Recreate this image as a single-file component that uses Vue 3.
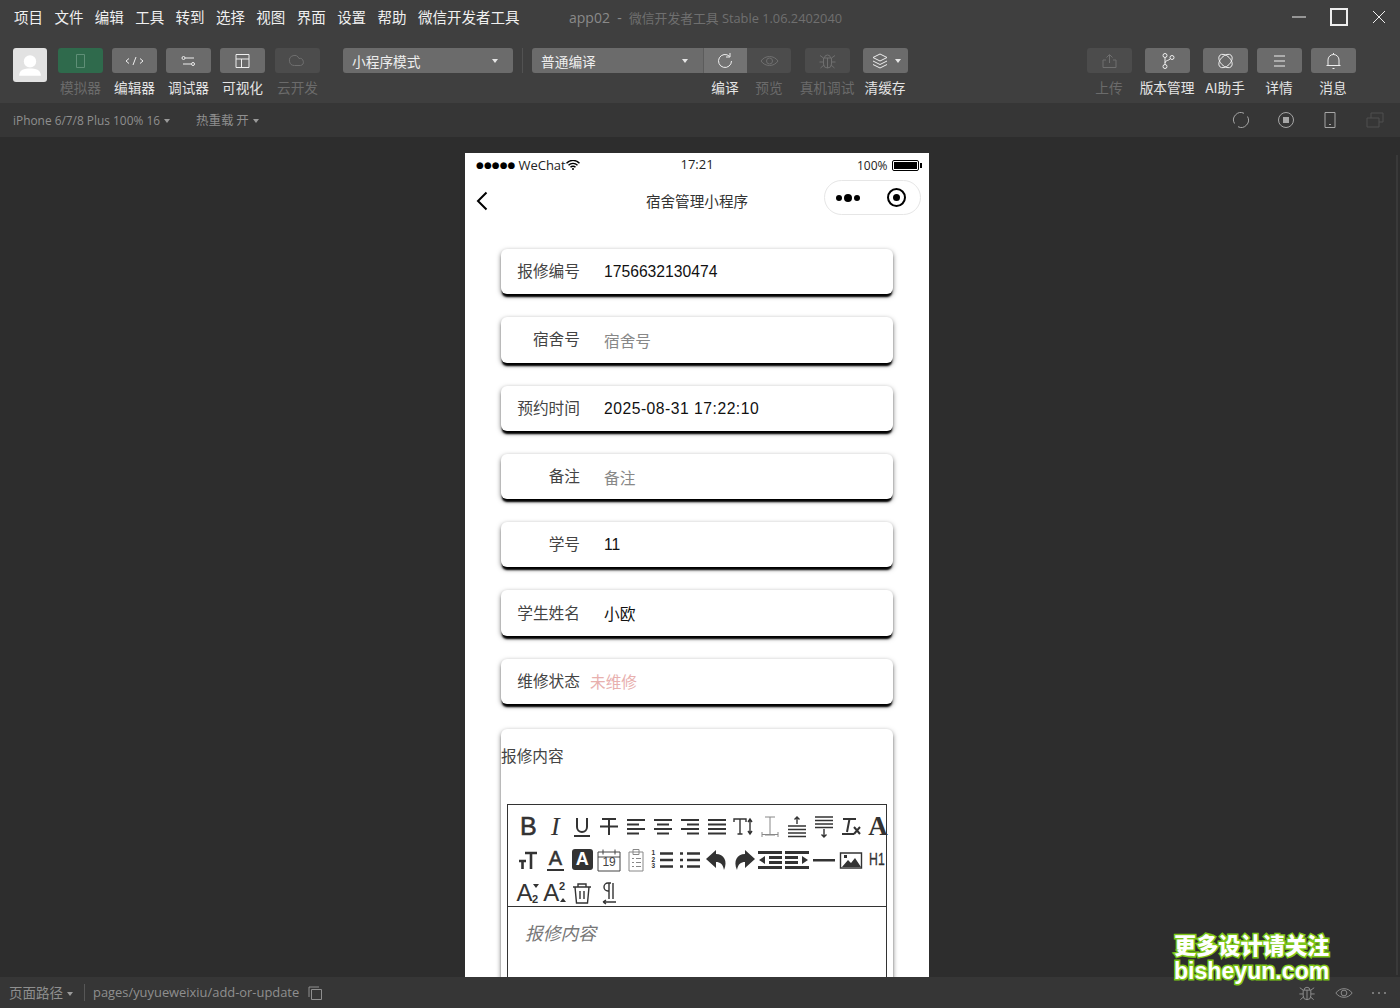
<script setup>
const menus = ['项目', '文件', '编辑', '工具', '转到', '选择', '视图', '界面', '设置', '帮助', '微信开发者工具']

const modeTools = [
  { label: '模拟器', cls: 'green', off: true, icon: 'M7.500 3.500h8v13h-8z' },
  { label: '编辑器', icon: 'M6 7.500 3 10l3 2.500M17 7.500l3 2.500-3 2.500M13 6l-3 8' },
  { label: '调试器', icon: 'M8 7h9M14 13H6M8 7a1.500 1.500 0 1 1-3 0 1.500 1.500 0 0 1 3 0ZM17.500 13a1.500 1.500 0 1 1-3 0 1.500 1.500 0 0 1 3 0Z' },
  { label: '可视化', icon: 'M5 3.500h13v13H5zM5 8h13M10.500 8v8.500' },
  { label: '云开发', off: true, icon: 'M8.500 14.500a5 5 0 1 1 4.500-7M13 7.500a3.500 3.500 0 1 1 1.500 7H8.500' }
]

const rightTools = [
  { label: '上传', off: true, icon: 'M11.500 12V4M8.500 6.500l3-3 3 3M8 9H5v7.500h13V9h-3' },
  { label: '版本管理', icon: 'M9 6.500v7M9 12c0-3 4-2 5.500-4.500M11 4.500a2 2 0 1 1-4 0 2 2 0 0 1 4 0ZM11 15.500a2 2 0 1 1-4 0 2 2 0 0 1 4 0ZM18 6.500a2 2 0 1 1-4 0 2 2 0 0 1 4 0Z' },
  { label: 'AI助手', icon: 'M5.800 4.300A8 5 45 1 1 17.200 15.700 8 5 45 1 1 5.800 4.300ZM17.200 4.300A8 5 -45 1 1 5.800 15.700 8 5 -45 1 1 17.200 4.300Z' },
  { label: '详情', icon: 'M6 5h11M6 10h11M6 15h11' },
  { label: '消息', icon: 'M6 14.500V9a5.500 5.500 0 0 1 11 0v5.500M4.500 14.500h14M11.500 3.500V2M10.500 17.500h2' }
]

const fields = [
  { label: '报修编号', value: '1756632130474' },
  { label: '宿舍号', value: '宿舍号', hint: true },
  { label: '预约时间', value: '2025-08-31 17:22:10', spaced: true },
  { label: '备注', value: '备注', hint: true },
  { label: '学号', value: '11' },
  { label: '学生姓名', value: '小欧' },
  { label: '维修状态', value: '未维修', state: true }
]

// editor toolbar, one entry per button
const editorTools = [
  { text: 'B', cls: 'big' },
  { text: 'I', cls: 'ital' },
  { d: 'M7 3v9a5 5 0 0 0 10 0V3M4 21h16', thick: true },
  { d: 'M5 4h14M12 4v16M3 11.500h18', thick: true },
  { d: 'M3 5h18M3 9.500h12M3 14h18M3 18.500h12', thick: true },
  { d: 'M3 5h18M6 9.500h12M3 14h18M6 18.500h12', thick: true },
  { d: 'M3 5h18M9 9.500h12M3 14h18M9 18.500h12', thick: true },
  { d: 'M3 5h18M3 9.500h18M3 14h18M3 18.500h18', thick: true },
  { d: 'M2 7V4h12v3M8 4v15M5.500 19h5M18 4v15M16 7l2-3 2 3M16 16l2 3 2-3' },
  { d: 'M7 2h10M7 20h10M12 2v18M4 17v5M20 17v5M4 19.500h16', light: true },
  { d: 'M12 9V2M9.500 4.500 12 2l2.500 2.500M3 11h18M3 14.500h18M3 18h18M3 21.500h18' },
  { d: 'M3 2h18M3 5.500h18M3 9h18M3 12.500h18M12 14v8M9.500 19.500 12 22l2.500-2.500' },
  { d: 'M4 4h13M10.500 4 8 17M3 19h12M15 12l6 7M21 12l-6 7', thick: true },
  { text: 'A', cls: 'serif' },
  { d: 'M9 5h12M15 5v16M3 13h7M6.500 13v8', heavy: true },
  { text: 'A', cls: 'under' },
  { text: 'A', cls: 'boxed' },
  { d: 'M1 4h22v19H1zM1 9h22M6 1.500v5M18 1.500v5', dark: true, text: '19', cls: 'cal' },
  { d: 'M5 4h14v19H5zM9 1.500h6v5H9zM8 10l1 1 1-1M12 10.500h5M8 14l1 1 1-1M12 14.500h5M8 18l1 1 1-1M12 18.500h5', light: true },
  { d: 'M9 5.500h13M9 12h13M9 18.500h13', heavy: true, numbers: true },
  { d: 'M9 5.500h13M9 12h13M9 18.500h13M2 5.500h3M2 12h3M2 18.500h3', heavy: true },
  { fill: 'M11 2 1 11l10 9v-6c4 0 7 2 8 8 4-9 0-16-8-16Z' },
  { fill: 'M13 2l10 9-10 9v-6c-4 0-7 2-8 8-4-9 0-16 8-16Z' },
  { fill: 'M0 3h24v3H0zM11 8h13v3H11zM11 13h13v3H11zM0 18h24v3H0zM7 8v8l-6-4Z' },
  { fill: 'M0 3h24v3H0zM0 8h13v3H0zM0 13h13v3H0zM0 18h24v3H0zM17 8v8l6-4Z' },
  { fill: 'M1 11h22v2.500H1Z' },
  { d: 'M1.500 5h21v15h-21z', fillD: 'M3 19l6-7 3 3 4-5 6 9ZM5 7h3v3H5Z' },
  { text: 'H1', cls: 'head' },
  { text: 'A', cls: 'sub', mark: 'down' },
  { text: 'A', cls: 'sub', mark: 'up' },
  { d: 'M3 6h18M8 6V3h8v3M5 6l1.500 16h11L19 6M10 10v8M14 10v8' },
  { d: 'M14 2h-3a4 4 0 0 0 0 8h1V2M12 10v8M16 2v16M6 21h13M6 21l3-2M6 21l3 2' }
]
</script>

<template>
  <div class="ide">
    <header class="top">
      <div class="titlebar">
        <nav class="menu">
          <span v-for="m in menus" :key="m">{{ m }}</span>
        </nav>
        <div class="apptitle">app02 &nbsp;-&nbsp; <span>微信开发者工具 Stable 1.06.2402040</span></div>
        <div class="winbtns">
          <svg width="16" height="16" viewBox="0 0 16 16"><path d="M1 8h14" /></svg>
          <svg width="20" height="20" viewBox="0 0 20 20"><path class="heavy" d="M2 2h16v16H2z" /></svg>
          <svg width="16" height="16" viewBox="0 0 16 16"><path d="M2 2l12 12M14 2 2 14" /></svg>
        </div>
      </div>

      <div class="toolbar">
        <div class="avatar">
          <svg width="34" height="34" viewBox="0 0 33 33">
            <circle cx="16.500" cy="13" r="6" class="solid" />
            <path d="M6 27c0-6 5-7 10.500-7S27 21 27 27Z" class="solid" />
          </svg>
        </div>
        <div class="modes">
          <div v-for="t in modeTools" :key="t.label" class="tool" :class="{ off: t.off }">
            <div class="btn" :class="t.cls">
              <svg width="23" height="20" viewBox="0 0 23 20"><path :d="t.icon" /></svg>
            </div>
            <span>{{ t.label }}</span>
          </div>
        </div>
        <div class="select mode">小程序模式<i class="caret"></i></div>
        <div class="divider"></div>
        <div class="compile">
          <div class="select build">普通编译<i class="caret"></i></div>
          <div class="tool wide">
            <div class="btn seg">
              <svg width="23" height="20" viewBox="0 0 23 20"><path d="M17.500 10a6.500 6.500 0 1 1-2-4.700M16 2v4h-4" /></svg>
            </div>
            <span>编译</span>
          </div>
          <div class="tool wide off">
            <div class="btn seg">
              <svg width="23" height="20" viewBox="0 0 23 20"><path d="M3 10c4-6 13-6 17 0-4 6-13 6-17 0Z" /><circle cx="11.500" cy="10" r="3" /></svg>
            </div>
            <span>预览</span>
          </div>
          <div class="tool wide gap off">
            <div class="btn">
              <svg width="23" height="20" viewBox="0 0 23 20"><path d="M7.500 7h8v6a4 4 0 0 1-8 0ZM8.500 7a3 3 0 0 1 6 0M11.500 7v10M7.500 7 4 4.500M15.500 7 19 4.500M7.500 11H3.500M15.500 11h4M8 14l-3.500 3M15 14l3.500 3" /></svg>
            </div>
            <span>真机调试</span>
          </div>
          <div class="tool wide gap">
            <div class="btn">
              <svg width="23" height="20" viewBox="0 0 23 20"><path d="M10 3 3 6.500 10 10l7-3.500ZM3 10l7 3.500 7-3.500M3 13.500 10 17l7-3.500" /></svg>
              <i class="caret small"></i>
            </div>
            <span>清缓存</span>
          </div>
        </div>
        <div class="rights">
          <div v-for="t in rightTools" :key="t.label" class="tool" :class="{ off: t.off }">
            <div class="btn">
              <svg width="23" height="20" viewBox="0 0 23 20"><path :d="t.icon" /></svg>
            </div>
            <span>{{ t.label }}</span>
          </div>
        </div>
      </div>

      <div class="subbar">
        <div class="device">iPhone 6/7/8 Plus 100% 16<i class="caret dim"></i></div>
        <div class="reload">热重载 开<i class="caret dim"></i></div>
        <div class="subicons">
          <svg width="18" height="18" viewBox="0 0 18 18"><path d="M2.500 12.500A7.300 7.300 0 0 1 12 2.300M15.500 5.500A7.300 7.300 0 0 1 6 15.700" /></svg>
          <svg width="18" height="18" viewBox="0 0 18 18"><circle cx="9" cy="9" r="7.500" /><rect x="6" y="6" width="6" height="6" class="solid" /></svg>
          <svg width="18" height="18" viewBox="0 0 18 18"><path d="M4 1.500h10v15H4zM8 13.500h2" /></svg>
          <svg class="faint" width="18" height="18" viewBox="0 0 18 18"><path d="M1 7h12v9H1zM5 7V2h12v9h-4" /></svg>
        </div>
      </div>
    </header>

    <main class="stage">
      <div class="phone">
        <div class="statusbar">
          <span class="dots">●●●●●</span>
          <span class="carrier">WeChat</span>
          <svg class="wifi" width="14" height="10" viewBox="0 0 14 10">
            <path d="M.5 3.200a9 9 0 0 1 13 0M2.500 5.300a6.300 6.300 0 0 1 9 0M4.500 7.300a3.400 3.400 0 0 1 5 0" />
            <circle cx="7" cy="9" r="1" />
          </svg>
          <span class="clock">17:21</span>
          <span class="percent">100%</span>
          <span class="battery"><i></i></span>
        </div>
        <div class="navbar">
          <svg class="back" width="12" height="20" viewBox="0 0 12 20"><path d="M10.500 1.500 2 10l8.500 8.500" /></svg>
          <span class="navtitle">宿舍管理小程序</span>
          <div class="capsule">
            <span class="more"><i></i><i class="mid"></i><i></i></span>
            <span class="target"><i></i></span>
          </div>
        </div>

        <div class="form">
          <div v-for="f in fields" :key="f.label" class="card">
            <label>{{ f.label }}</label>
            <span class="value" :class="{ hint: f.hint, state: f.state, spaced: f.spaced }">{{ f.value }}</span>
          </div>

          <div class="card content">
            <div class="content-title">报修内容</div>
            <div class="editor">
              <div class="ql-toolbar">
                <span v-for="(t, i) in editorTools" :key="i" class="ql-btn">
                  <svg v-if="t.d || t.fill" width="24" height="24" viewBox="0 0 24 24">
                    <path v-if="t.d" :d="t.d" :class="{ thick: t.thick, light: t.light, heavy: t.heavy, dark: t.dark }" />
                    <path v-if="t.fill" :d="t.fill" class="filled" />
                    <path v-if="t.fillD" :d="t.fillD" class="filled" />
                  </svg>
                  <em v-if="t.numbers" class="nums">1<br />2<br />3</em>
                  <b v-if="t.text" :class="t.cls">{{ t.text }}</b>
                  <template v-if="t.mark">
                    <em class="mark" :class="t.mark">2</em>
                    <i class="tri" :class="t.mark"></i>
                  </template>
                </span>
              </div>
              <div class="ql-body">报修内容</div>
            </div>
          </div>
        </div>
      </div>
      <div class="scrollbar"></div>
    </main>

    <footer class="statusline">
      <span class="path-label">页面路径<i class="caret dim"></i></span>
      <span class="path">pages/yuyueweixiu/add-or-update</span>
      <svg class="copy" width="16" height="16" viewBox="0 0 16 16"><path d="M4.500 4.500h10v10h-10zM2 12V2h10" /></svg>
      <div class="foot-right">
        <svg width="22" height="20" viewBox="0 0 23 20"><path d="M7.500 7h8v6a4 4 0 0 1-8 0ZM8.500 7a3 3 0 0 1 6 0M11.500 7v10M7.500 7 4 4.500M15.500 7 19 4.500M7.500 11H3.500M15.500 11h4M8 14l-3.500 3M15 14l3.500 3" /></svg>
        <svg width="22" height="20" viewBox="0 0 23 20"><path d="M3 10c4-6 13-6 17 0-4 6-13 6-17 0Z" /><circle cx="11.500" cy="10" r="3" /></svg>
        <span class="ellipsis"><i></i><i></i><i></i></span>
      </div>
    </footer>

    <div class="watermark">
      <div>更多设计请关注</div>
      <div class="site">bisheyun.com</div>
    </div>
  </div>
</template>

<style>
html, body { margin: 0; background: #2d2d2d; }
</style>

<style scoped>
.ide {
  position: relative;
  display: flex;
  flex-direction: column;
  height: 1008px;
  overflow: hidden;
  font-family: "Noto Sans CJK SC", "Open Sans", sans-serif;
  color: #ddd;
  background: #2d2d2d;
}

svg path, svg circle { fill: none; stroke: currentColor; stroke-width: 1; }
svg .solid { fill: currentColor; stroke: none; }

.top { background: #3f3f3f; }

.titlebar {
  position: relative;
  display: flex;
  align-items: center;
  box-sizing: border-box;
  height: 35px;
  padding: 0 0 2px 14px;
}
.menu { display: flex; gap: 11.400px; font-size: 14.500px; color: #f0f0f0; }
.apptitle {
  position: absolute;
  left: 569px;
  top: 9px;
  font-family: "Open Sans", "Noto Sans CJK SC", sans-serif;
  font-size: 14px;
  line-height: 18px;
  color: #8a8a8a;
}
.apptitle span { font-size: 12.800px; color: #6f6f6f; }
.winbtns {
  position: absolute;
  right: 13px;
  top: 7px;
  display: flex;
  align-items: center;
  gap: 22px;
  color: #eee;
}
.winbtns .heavy { stroke-width: 2; }

.toolbar {
  display: flex;
  align-items: flex-start;
  height: 68px;
  padding: 13px 0 0 13px;
  box-sizing: border-box;
}
.avatar {
  width: 34px;
  height: 34px;
  margin-right: 11px;
  background: #e2e2e2;
  border-radius: 3px;
  color: #fff;
}
.modes, .rights { display: flex; gap: 9px; }
.tool {
  display: flex;
  flex-direction: column;
  align-items: center;
  width: 45px;
  font-size: 13.700px;
  color: #e4e4e4;
}
.tool span { margin-top: 4px; line-height: 20px; white-space: nowrap; }
.tool.off { color: #6b6b6b; }
.btn {
  display: flex;
  align-items: center;
  justify-content: center;
  gap: 2px;
  width: 45px;
  height: 25px;
  background: #6b6b6b;
  border-radius: 3px;
  color: #eee;
}
.tool.off .btn { background: #4c4c4c; color: #6f6f6f; }
.btn.green, .tool.off .btn.green { background: #2f6a4c; color: #5f8f77; }
.modes .tool:last-child { margin-left: 1px; }

.select {
  display: flex;
  align-items: center;
  justify-content: space-between;
  box-sizing: border-box;
  height: 25px;
  padding: 0 15px 0 9px;
  background: #6b6b6b;
  border-radius: 3px;
  font-size: 13.700px;
  color: #eee;
}
.mode { width: 170px; margin-left: 23px; }
.divider { width: 1px; height: 25px; margin: 0 9px; background: #525252; }
.build { width: 171px; border-radius: 3px 0 0 3px; }
.compile { display: flex; align-items: flex-start; }
.wide { width: 44px; }
.wide.gap { margin-left: 14px; }
.seg { width: 44px; border-radius: 0; border-left: 1px solid #5c5c5c; box-sizing: border-box; background: #737373; }
.tool.off .seg { border-left: 0; border-radius: 0 3px 3px 0; }
.rights { position: absolute; left: 1086.500px; gap: 9px; }
.rights .tool:nth-child(2), .rights .tool:nth-child(3) { margin-left: 4px; }

.caret {
  display: inline-block;
  width: 0;
  height: 0;
  border-left: 3px solid transparent;
  border-right: 3px solid transparent;
  border-top: 4px solid #e6e6e6;
}
.caret.dim { border-top-color: #9a9a9a; margin-left: 4px; vertical-align: 2px; }

.subbar {
  position: relative;
  display: flex;
  align-items: center;
  height: 34px;
  background: #363636;
  font-size: 12.500px;
  color: #8f8f8f;
}
.device { font-family: "Open Sans", sans-serif; font-size: 11.900px; margin-left: 13px; width: 183px; }
.reload { padding-bottom: 2px; }
.subicons {
  position: absolute;
  left: 1232px;
  top: 8px;
  display: flex;
  gap: 26.500px;
  color: #a6a6a6;
}
.subicons .faint { color: #4f4f4f; }

.stage { position: relative; flex: 1; min-height: 0; overflow: hidden; }
.scrollbar {
  position: absolute;
  right: 2px;
  top: 18px;
  width: 2px;
  height: 820px;
  background: #393939;
}

.phone {
  width: 464px;
  height: 824px;
  margin: 16px 0 0 465px;
  overflow: hidden;
  background: #fff;
  color: #333;
}

.statusbar {
  position: relative;
  display: flex;
  align-items: center;
  height: 24px;
  padding-left: 11px;
  font-family: "Open Sans", sans-serif;
  font-size: 13px;
  color: #222;
}
.dots { font-family: "DejaVu Sans", sans-serif; font-size: 8.800px; letter-spacing: .2px; color: #000; }
.carrier { margin-left: 3px; }
.wifi { margin-left: 0; }
.wifi path { stroke: #000; stroke-width: 1.400; }
.wifi circle { fill: #000; stroke: none; }
.clock { position: absolute; left: 215.500px; top: 2px; }
.percent { position: absolute; left: 392px; font-size: 12px; }
.battery {
  position: absolute;
  left: 427px;
  top: 7px;
  box-sizing: border-box;
  width: 27px;
  height: 11px;
  padding: 1px;
  border: 1px solid #000;
  border-radius: 2px;
}
.battery i { display: block; height: 100%; background: #000; }
.battery::after {
  content: "";
  position: absolute;
  right: -4px;
  top: 2px;
  width: 2px;
  height: 5px;
  background: #000;
}

.navbar {
  position: relative;
  display: flex;
  align-items: center;
  justify-content: center;
  height: 48px;
}
.back { position: absolute; left: 11px; top: 14px; color: #000; }
.back path { stroke-width: 2; }
.navtitle { padding-bottom: 2px; font-size: 14.600px; color: #333; }
.capsule {
  position: absolute;
  left: 359px;
  top: 3px;
  display: flex;
  align-items: center;
  box-sizing: border-box;
  width: 97px;
  height: 35px;
  border: 1px solid #e6e6e6;
  border-radius: 18px;
}
.more { display: flex; align-items: center; gap: 2px; margin-left: 11px; }
.more i { width: 6px; height: 6px; border-radius: 50%; background: #000; }
.more i.mid { width: 8px; height: 8px; }
.target {
  display: flex;
  align-items: center;
  justify-content: center;
  box-sizing: border-box;
  width: 19px;
  height: 19px;
  margin-left: 27px;
  border: 2.500px solid #000;
  border-radius: 50%;
}
.target i { width: 7px; height: 7px; border-radius: 50%; background: #000; }

.form {
  display: flex;
  flex-direction: column;
  gap: 23px;
  padding: 24px 36px 0;
}
.card {
  display: flex;
  align-items: center;
  box-sizing: border-box;
  height: 45.300px;
  background: #fff;
  border-radius: 6px;
  box-shadow: 0 4px 2px -1px #000, 0 2px 5px rgba(0, 0, 0, .55);
  font-size: 15.700px;
}
.card label {
  width: 79px;
  margin-right: 24px;
  padding-bottom: 2px;
  text-align: right;
  color: #444;
}
.value {
  padding-top: 1px;
  font-family: "Liberation Sans", "Noto Sans CJK SC", sans-serif;
  font-size: 15.700px;
  color: #111;
}
.value.hint { padding-top: 2px; color: #888; font-family: "Noto Sans CJK SC", sans-serif; }
.value.state { padding-top: 0; margin-left: -14px; color: #e8b0ae; font-family: "Noto Sans CJK SC", sans-serif; }
.value.spaced { letter-spacing: .5px; }

.content {
  display: block;
  flex-shrink: 0;
  height: 300px;
  margin-top: 2px;
  border-radius: 6px 6px 0 0;
}
.content-title { padding-top: 14px; line-height: 26px; color: #444; }
.editor { margin: 35px 6px 0; border: 1px solid #333; color: #333; }
.ql-toolbar {
  display: grid;
  grid-template-columns: repeat(14, 26.900px);
  grid-auto-rows: 33px;
  box-sizing: border-box;
  height: 102px;
  padding: 5px 0 0 7px;
  border-bottom: 1px solid #333;
}
.ql-btn {
  position: relative;
  display: flex;
  align-items: center;
  justify-content: center;
  height: 33px;
}
.ql-btn svg { display: block; }
.ql-btn svg path { stroke-width: 1.400; }
.ql-btn svg path.thick { stroke-width: 2; }
.ql-btn svg path.heavy { stroke-width: 2.600; }
.ql-btn svg path.light { stroke-width: 1; stroke: #888; }
.ql-btn svg path.dark { stroke-width: 1; stroke: #444; }
.ql-btn svg path.filled { fill: #333; stroke: none; }
.ql-btn b { font-family: "Liberation Sans", sans-serif; font-weight: 400; line-height: 1; }
.ql-btn b.big { font-size: 25px; -webkit-text-stroke: .6px #333; }
.ql-btn b.ital { font-size: 26px; font-style: italic; font-family: "Liberation Serif", serif; }
.ql-btn b.serif { font-family: "Liberation Serif", serif; font-weight: 700; font-size: 27px; }
.ql-btn b.under {
  padding: 0 2px 1px;
  border-bottom: 2.500px solid #333;
  font-size: 20px;
  -webkit-text-stroke: .5px #333;
}
.ql-btn b.boxed {
  width: 21px;
  height: 21px;
  font-size: 18px;
  line-height: 21px;
  font-weight: 700;
  text-align: center;
  color: #fff;
  background: #333;
  border-radius: 3px;
}
.ql-btn b.cal { position: absolute; top: 13px; font-size: 12px; color: #444; }
.ql-btn b.head { font-size: 17px; transform: scaleX(.72); -webkit-text-stroke: .3px #333; margin-left: -2px; }
.ql-btn b.sub { margin-left: -8px; font-size: 24px; }
.nums {
  position: absolute;
  left: 2px;
  top: 7px;
  font: 700 6.500px/6.500px "Liberation Sans", sans-serif;
  color: #333;
}
.mark {
  position: absolute;
  left: 17px;
  font: 700 11px/11px "Liberation Sans", sans-serif;
  color: #333;
}
.mark.down { top: 18px; }
.mark.up { top: 5px; }
.tri {
  position: absolute;
  left: 18px;
  width: 0;
  height: 0;
  border-left: 3px solid transparent;
  border-right: 3px solid transparent;
}
.tri.down { top: 8px; border-top: 4px solid #333; }
.tri.up { top: 22px; border-bottom: 4px solid #333; }
.ql-body {
  height: 200px;
  padding: 12px 17px;
  font-size: 17.800px;
  font-style: italic;
  line-height: 26px;
  color: #777;
}

.statusline {
  display: flex;
  align-items: center;
  box-sizing: border-box;
  height: 31px;
  padding: 0 0 0 9px;
  background: #363636;
  font-size: 13.500px;
  color: #8f8f8f;
}
.path-label { padding-right: 11px; border-right: 1px solid #575757; line-height: 16px; padding-bottom: 1px; }
.path { margin-left: 8px; padding-bottom: 1px; font-family: "Open Sans", sans-serif; font-size: 12.900px; }
.copy { margin-left: 8px; }
.foot-right {
  position: absolute;
  left: 1296px;
  display: flex;
  align-items: center;
  gap: 15px;
}
.ellipsis { display: flex; gap: 4px; margin-left: 2px; }
.ellipsis i { width: 2px; height: 2px; background: #8f8f8f; border-radius: 50%; }

.watermark {
  position: absolute;
  left: 1174px;
  top: 931px;
  font-weight: 900;
  font-size: 22.200px;
  line-height: 27px;
  color: #fff;
  -webkit-text-stroke: 3px #7cc516;
  paint-order: stroke fill;
  white-space: nowrap;
}
.watermark .site { font-family: "Liberation Sans", sans-serif; font-weight: 700; font-size: 23.100px; }
</style>
